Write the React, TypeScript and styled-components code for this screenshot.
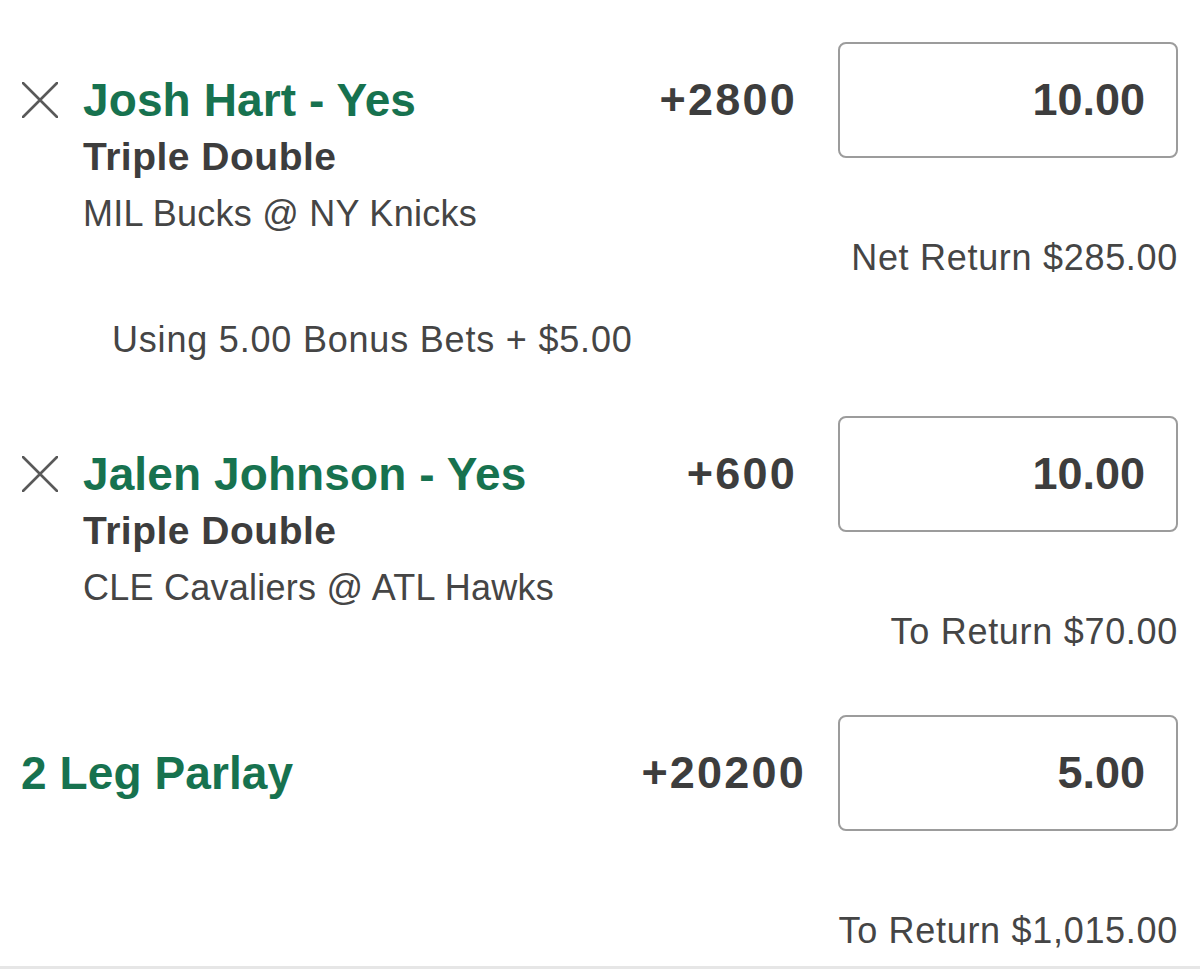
import * as React from 'react'
import styled, { createGlobalStyle } from 'styled-components'

const GlobalStyle = createGlobalStyle`
  html, body {
    margin: 0;
    padding: 0;
    background: #ffffff;
  }
  body {
    font-family: 'Liberation Sans', Arial, sans-serif;
    color: #3d3d3d;
  }
`

const GREEN = '#17724f'
const TEXT_DARK = '#3d3d3d'
const TEXT = '#454545'

const BetSlip = styled.div`
  width: 1200px;
  display: flex;
  flex-direction: column;
  padding-top: 42px;
`

const LegRow = styled.div<{ gap: number }>`
  display: flex;
  justify-content: space-between;
  align-items: flex-start;
  padding: 0 22px 0 21px;
  margin-top: ${(p) => p.gap}px;
`

const LegInfo = styled.div<{ indent?: boolean }>`
  display: flex;
  align-items: flex-start;
  padding-top: 30px;
  padding-left: ${(p) => (p.indent ? 0 : 1)}px;
`

const RemoveButton = styled.button`
  border: 0;
  background: none;
  padding: 0;
  margin: 10px 25px 0 0;
  width: 36px;
  height: 36px;
  display: flex;
  cursor: pointer;
`

const InfoText = styled.div`
  display: flex;
  flex-direction: column;
`

const Selection = styled.div`
  font-size: 46px;
  line-height: 56px;
  font-weight: 700;
  letter-spacing: 0.1px;
  color: ${GREEN};
  white-space: nowrap;
`

const Market = styled.div`
  font-size: 39px;
  line-height: 58px;
  font-weight: 700;
  letter-spacing: 0.5px;
  color: ${TEXT_DARK};
`

const EventName = styled.div`
  font-size: 36px;
  line-height: 56px;
  letter-spacing: 0.25px;
  color: ${TEXT};
`

const StakeColumn = styled.div`
  display: flex;
  flex-direction: column;
  align-items: flex-end;
`

const StakeRow = styled.div`
  display: flex;
  align-items: center;
`

const Odds = styled.div<{ gap: number }>`
  font-size: 45px;
  font-weight: 700;
  letter-spacing: 2.2px;
  color: ${TEXT_DARK};
  margin-right: ${(p) => p.gap}px;
`

const StakeBox = styled.div`
  box-sizing: border-box;
  width: 340px;
  height: 116px;
  border: 2px solid #9c9c9c;
  border-radius: 8px;
  display: flex;
  align-items: center;
  justify-content: flex-end;
  padding-right: 31px;
  font-size: 45px;
  font-weight: 700;
  color: ${TEXT_DARK};
`

const ReturnText = styled.div`
  margin-top: 80px;
  font-size: 36px;
  line-height: 40px;
  letter-spacing: 0.7px;
  color: ${TEXT};
  white-space: nowrap;
`

const BonusNote = styled.div`
  margin-top: 42px;
  padding-left: 112px;
  font-size: 36px;
  line-height: 40px;
  letter-spacing: 0.8px;
  color: ${TEXT};
`

const Divider = styled.div`
  margin-top: 15px;
  height: 3px;
  background: #e6e6e6;
`

const CloseIcon = () => (
  <svg width='36' height='36' viewBox='0 0 36 36' fill='none'>
    <path
      d='M1 1 L35 35 M35 1 L1 35'
      stroke='#595959'
      strokeWidth='2.6'
      strokeLinecap='round'
    />
  </svg>
)

interface Leg {
  selection: string
  market?: string
  event?: string
  odds: string
  stake: string
  returnLabel: string
  removable?: boolean
  oddsGap: number
}

interface LegProps {
  leg: Leg
  gap: number
}

const BetLeg = ({ leg, gap }: LegProps) => (
  <LegRow gap={gap}>
    <LegInfo indent={!leg.removable}>
      {leg.removable && (
        <RemoveButton aria-label='Remove'>
          <CloseIcon />
        </RemoveButton>
      )}
      <InfoText>
        <Selection>{leg.selection}</Selection>
        {leg.market && <Market>{leg.market}</Market>}
        {leg.event && <EventName>{leg.event}</EventName>}
      </InfoText>
    </LegInfo>
    <StakeColumn>
      <StakeRow>
        <Odds gap={leg.oddsGap}>{leg.odds}</Odds>
        <StakeBox>{leg.stake}</StakeBox>
      </StakeRow>
      <ReturnText>{leg.returnLabel}</ReturnText>
    </StakeColumn>
  </LegRow>
)

const singles: Leg[] = [
  {
    selection: 'Josh Hart - Yes',
    market: 'Triple Double',
    event: 'MIL Bucks @ NY Knicks',
    odds: '+2800',
    stake: '10.00',
    returnLabel: 'Net Return $285.00',
    removable: true,
    oddsGap: 41,
  },
  {
    selection: 'Jalen Johnson - Yes',
    market: 'Triple Double',
    event: 'CLE Cavaliers @ ATL Hawks',
    odds: '+600',
    stake: '10.00',
    returnLabel: 'To Return $70.00',
    removable: true,
    oddsGap: 41,
  },
]

const parlay: Leg = {
  selection: '2 Leg Parlay',
  odds: '+20200',
  stake: '5.00',
  returnLabel: 'To Return $1,015.00',
  oddsGap: 32,
}

export default function App() {
  return (
    <>
      <GlobalStyle />
      <BetSlip>
        <BetLeg leg={singles[0]} gap={0} />
        <BonusNote>Using 5.00 Bonus Bets + $5.00</BonusNote>
        <BetLeg leg={singles[1]} gap={56} />
        <BetLeg leg={parlay} gap={63} />
        <Divider />
      </BetSlip>
    </>
  )
}
